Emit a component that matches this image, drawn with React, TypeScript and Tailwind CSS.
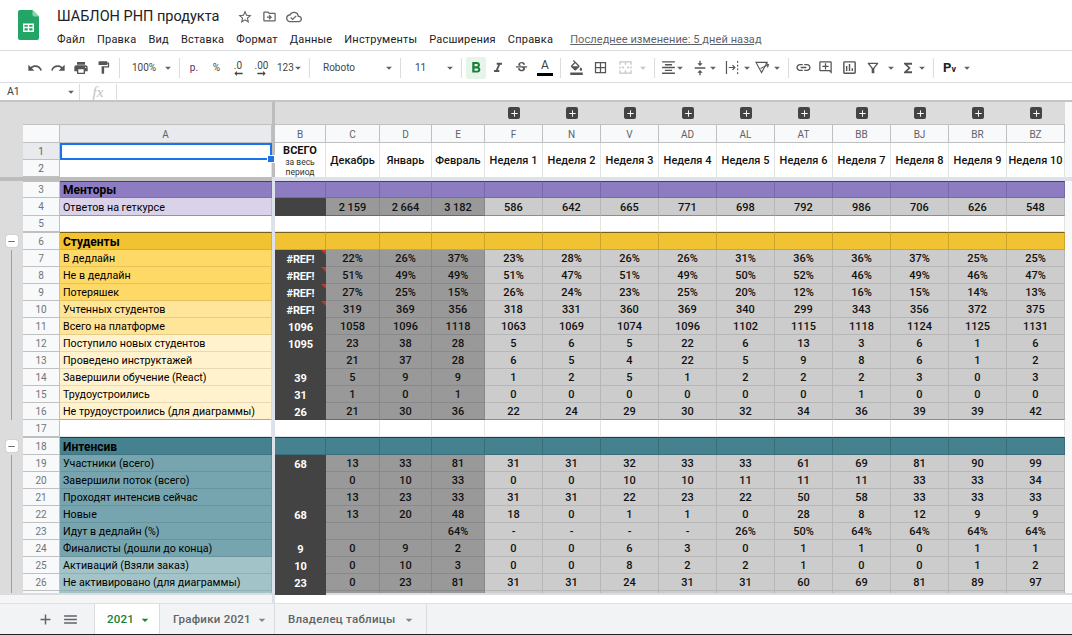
import type { ReactNode } from 'react';
import {
  MdAdd,
  MdArrowDropDown,
  MdBorderAll,
  MdFormatAlignCenter,
  MdFormatBold,
  MdFormatColorFill,
  MdFormatItalic,
  MdFormatPaint,
  MdFunctions,
  MdInsertLink,
  MdMenu,
  MdOutlineAddComment,
  MdOutlineCloudDone,
  MdOutlineDriveFileMove,
  MdOutlineFilterAlt,
  MdOutlineInsertChart,
  MdPrint,
  MdRedo,
  MdRemove,
  MdStarBorder,
  MdStrikethroughS,
  MdUndo,
  MdVerticalAlignCenter,
} from 'react-icons/md';

const cols = 'grid grid-cols-[23px_37px_212px_3px_51px_54px_52px_53px_repeat(10,58px)_7px]';

const menu = ['Файл', 'Правка', 'Вид', 'Вставка', 'Формат', 'Данные', 'Инструменты', 'Расширения', 'Справка'];
const letters = ['F', 'N', 'V', 'AD', 'AL', 'AT', 'BB', 'BJ', 'BR', 'BZ'];
const months = ['Декабрь', 'Январь', 'Февраль'];
const weeks = ['Неделя 1', 'Неделя 2', 'Неделя 3', 'Неделя 4', 'Неделя 5', 'Неделя 6', 'Неделя 7', 'Неделя 8', 'Неделя 9', 'Неделя 10'];

type Row = {
  n: number | '';
  label?: string;
  tone: string;
  h?: string;
  kind?: 'band' | 'blank';
  band?: string;
  group?: 'minus' | 'line';
  top?: boolean;
  edge?: boolean;
  b?: string;
  m?: string[];
  w?: string[];
};

const list = (s: string) => s.split(' ');
const pct = (s: string) => list(s).map((v) => v + '%');

const rows: Row[] = [
  { n: 3, label: 'Менторы', tone: 'bg-[#8e7cc3]', kind: 'band', band: 'bg-[#8e7cc3]', top: true },
  { n: 4, label: 'Ответов на геткурсе', tone: 'bg-[#d9d2e9]', h: 'h-[18px]', edge: true, b: '', m: ['2 159', '2 664', '3 182'], w: list('586 642 665 771 698 792 986 706 626 548') },
  { n: 5, tone: 'bg-white', h: 'h-[16px]', kind: 'blank' },
  { n: 6, label: 'Студенты', tone: 'bg-[#f1c232]', h: 'h-[18px]', kind: 'band', band: 'bg-[#f1c232]', group: 'minus', top: true },
  { n: 7, label: 'В дедлайн', tone: 'bg-[#ffd966]', group: 'line', b: '#REF!', m: pct('22 26 37'), w: pct('23 28 26 26 31 36 36 37 25 25') },
  { n: 8, label: 'Не в дедлайн', tone: 'bg-[#ffd966]', group: 'line', b: '#REF!', m: pct('51 49 49'), w: pct('51 47 51 49 50 52 46 49 46 47') },
  { n: 9, label: 'Потеряшек', tone: 'bg-[#ffd966]', group: 'line', b: '#REF!', m: pct('27 25 15'), w: pct('26 24 23 25 20 12 16 15 14 13') },
  { n: 10, label: 'Учтенных студентов', tone: 'bg-[#ffe599]', group: 'line', b: '#REF!', m: list('319 369 356'), w: list('318 331 360 369 340 299 343 356 372 375') },
  { n: 11, label: 'Всего на платформе', tone: 'bg-[#ffe599]', group: 'line', b: '1096', m: list('1058 1096 1118'), w: list('1063 1069 1074 1096 1102 1115 1118 1124 1125 1131') },
  { n: 12, label: 'Поступило новых студентов', tone: 'bg-[#fff2cc]', group: 'line', b: '1095', m: list('23 38 28'), w: list('5 6 5 22 6 13 3 6 1 6') },
  { n: 13, label: 'Проведено инструктажей', tone: 'bg-[#fff2cc]', group: 'line', b: '', m: list('21 37 28'), w: list('6 5 4 22 5 9 8 6 1 2') },
  { n: 14, label: 'Завершили обучение (React)', tone: 'bg-[#fff2cc]', group: 'line', b: '39', m: list('5 9 9'), w: list('1 2 5 1 2 2 2 3 0 3') },
  { n: 15, label: 'Трудоустроились', tone: 'bg-[#fff2cc]', group: 'line', b: '31', m: list('1 0 1'), w: list('0 0 0 0 0 0 1 0 0 0') },
  { n: 16, label: 'Не трудоустроились (для диаграммы)', tone: 'bg-[#fff2cc]', group: 'line', edge: true, b: '26', m: list('21 30 36'), w: list('22 24 29 30 32 34 36 39 39 42') },
  { n: 17, tone: 'bg-white', kind: 'blank' },
  { n: 18, label: 'Интенсив', tone: 'bg-[#45818e]', h: 'h-[18px]', kind: 'band', band: 'bg-[#45818e]', group: 'minus', top: true },
  { n: 19, label: 'Участники (всего)', tone: 'bg-[#76a5af]', group: 'line', b: '68', m: list('13 33 81'), w: list('31 31 32 33 33 61 69 81 90 99') },
  { n: 20, label: 'Завершили поток (всего)', tone: 'bg-[#76a5af]', group: 'line', b: '', m: list('0 10 33'), w: list('0 0 10 10 11 11 11 33 33 34') },
  { n: 21, label: 'Проходят интенсив сейчас', tone: 'bg-[#76a5af]', group: 'line', b: '', m: list('13 23 33'), w: list('31 31 22 23 22 50 58 33 33 33') },
  { n: 22, label: 'Новые', tone: 'bg-[#76a5af]', group: 'line', b: '68', m: list('13 20 48'), w: list('18 0 1 1 0 28 8 12 9 9') },
  { n: 23, label: 'Идут в дедлайн (%)', tone: 'bg-[#76a5af]', group: 'line', b: '', m: ['', '', '64%'], w: list('- - - - 26% 50% 64% 64% 64% 64%') },
  { n: 24, label: 'Финалисты (дошли до конца)', tone: 'bg-[#76a5af]', group: 'line', b: '9', m: list('0 9 2'), w: list('0 0 6 3 0 1 1 0 1 1') },
  { n: 25, label: 'Активаций (Взяли заказ)', tone: 'bg-[#a2c4c9]', group: 'line', b: '10', m: list('0 10 3'), w: list('0 0 8 2 2 1 0 0 1 2') },
  { n: 26, label: 'Не активировано (для диаграммы)', tone: 'bg-[#a2c4c9]', group: 'line', b: '23', m: list('0 23 81'), w: list('31 31 24 31 31 60 69 81 89 97') },
  { n: '', tone: 'bg-[#a2c4c9]', h: 'h-[2px]', group: 'line', b: '', m: ['', '', ''], w: ['', '', '', '', '', '', '', '', '', ''] },
];

function Tool({ w, children, className = 'justify-center' }: { w: string; children?: ReactNode; className?: string }) {
  return <div className={`flex h-[22px] shrink-0 items-center ${w} ${className}`}>{children}</div>;
}

function Sep() {
  return <div className="mx-[4px] h-[20px] w-px shrink-0 bg-[#dadce0]" />;
}

function Caret({ className = '' }: { className?: string }) {
  return <MdArrowDropDown size={14} className={`shrink-0 text-[#5f6368] ${className}`} />;
}

function DecimalIcon({ label, dir }: { label: string; dir: 'left' | 'right' }) {
  return (
    <div className="flex flex-col items-center text-[10px] leading-[11px] text-[#444746]">
      <span>{label}</span>
      <svg width="9" height="5" viewBox="0 0 10 6" className={dir === 'left' ? '' : 'rotate-180'}>
        <path d="M0 3l3-3v2h7v2H3v2z" fill="#444746" />
      </svg>
    </div>
  );
}

function Toolbar() {
  const ic = 'text-[#555]';
  return (
    <div className="flex h-[32px] items-center border-b border-[#dadce0] pl-[23px] pt-[2px] text-[10px] text-[#444746]">
      <Tool w="w-[23px]"><MdUndo size={16} className={ic} /></Tool>
      <Tool w="w-[23px]"><MdRedo size={16} className={ic} /></Tool>
      <Tool w="w-[23px]"><MdPrint size={16} className={ic} /></Tool>
      <Tool w="w-[23px]"><MdFormatPaint size={15} className={ic} /></Tool>
      <Sep />
      <Tool w="w-[51px]" className="justify-between pl-[8px]"><span>100%</span><Caret /></Tool>
      <Sep />
      <Tool w="w-[20px]"><span className="text-[#5b2c6f]">р.</span></Tool>
      <Tool w="w-[23px]" className="ml-px justify-center"><span>%</span></Tool>
      <Tool w="w-[20px]"><DecimalIcon label=".0" dir="left" /></Tool>
      <Tool w="w-[23px]" className="ml-[2px] justify-center"><DecimalIcon label=".00" dir="right" /></Tool>
      <Tool w="w-[32px]" className="justify-between pl-[4px]"><span>123</span><Caret className="-ml-[4px]" /></Tool>
      <Sep />
      <Tool w="w-[82px]" className="justify-between pl-[9px]"><span>Roboto</span><Caret /></Tool>
      <Sep />
      <Tool w="w-[52px]" className="justify-between pl-[10px]"><span>11</span><Caret /></Tool>
      <Sep />
      <Tool w="w-[20px]" className="justify-center rounded-[2px] bg-[#e6f4ea]"><MdFormatBold size={18} className="text-[#188038]" /></Tool>
      <Tool w="w-[22px]" className="ml-px justify-center"><MdFormatItalic size={16} className={ic} /></Tool>
      <Tool w="w-[22px]" className="ml-px justify-center"><MdStrikethroughS size={15} className={ic} /></Tool>
      <Tool w="w-[22px]" className="ml-[2px] flex-col justify-center">
        <span className="text-[12px] leading-[13px] text-[#3c4043]">A</span>
        <span className="mt-px h-[3px] w-[16px] bg-black" />
      </Tool>
      <Sep />
      <Tool w="w-[22px]"><MdFormatColorFill size={15} className={ic} /></Tool>
      <Tool w="w-[22px]" className="ml-[2px] justify-center"><MdBorderAll size={15} className={ic} /></Tool>
      <Tool w="w-[22px]" className="ml-[3px] justify-center">
        <svg width="13" height="13" viewBox="0 0 14 14" fill="none" stroke="#c4c7cc" strokeWidth="1.4">
          <path d="M1 4V1h12v3M1 10v3h12v-3" />
          <path d="M1 6v2M13 6v2M3 7h2.5M8.5 7H11M7 1v3M7 10v3" />
        </svg>
      </Tool>
      <Caret className="!text-[#c4c7cc]" />
      <Sep />
      <Tool w="w-[30px]" className="justify-start pl-px">
        <MdFormatAlignCenter size={17} className={ic} /><Caret className="-ml-[4px]" />
      </Tool>
      <Tool w="w-[30px]" className="ml-[2px] justify-start pl-px">
        <MdVerticalAlignCenter size={16} className={ic} /><Caret className="-ml-[2px]" />
      </Tool>
      <Tool w="w-[29px]" className="ml-[3px] justify-start pl-px">
        <svg width="15" height="13" viewBox="0 0 16 14" className="shrink-0" fill="none" stroke="#555" strokeWidth="1.3">
          <path d="M1.5 0v14" />
          <path d="M13.5 0v2M13.5 4v2M13.5 8v2M13.5 12v2" />
          <path d="M4 7h6M8 4.5L10.5 7 8 9.5" />
        </svg>
        <Caret />
      </Tool>
      <Tool w="w-[30px]" className="ml-px justify-start pl-px">
        <svg width="15" height="13" viewBox="0 0 16 14" className="shrink-0" fill="none" stroke="#555" strokeWidth="1.2">
          <path d="M1 1.5h12L7 12.5z" />
          <path d="M6 8l8-4M11.5 2.5L14.5 4l-1.2 3" />
        </svg>
        <Caret />
      </Tool>
      <Sep />
      <Tool w="w-[21px]"><MdInsertLink size={17} className={ic} /></Tool>
      <Tool w="w-[23px]"><MdOutlineAddComment size={15} className={ic} /></Tool>
      <Tool w="w-[22px]" className="ml-px justify-center"><MdOutlineInsertChart size={17} className={ic} /></Tool>
      <Tool w="w-[23px]" className="ml-px justify-center"><MdOutlineFilterAlt size={16} className={ic} /></Tool>
      <Caret />
      <Tool w="w-[20px]"><MdFunctions size={16} className={ic} /></Tool>
      <Caret className="-ml-[3px]" />
      <Sep />
      <Tool w="w-[23px]">
        <span className="text-[13px] font-bold text-[#202124]">P<span className="text-[9px]">v</span></span>
      </Tool>
      <Caret className="-ml-px" />
    </div>
  );
}

function Gutter({ group }: { group?: Row['group'] }) {
  return (
    <div className="flex justify-center bg-[#dcdcdc]">
      {group === 'line' && <div className="h-full w-px bg-[#9aa0a6]" />}
      {group === 'minus' && (
        <div className="mt-[3px] flex h-[12px] w-[12px] items-center justify-center rounded-[2px] bg-white shadow-[0_0_1px_#80868b]">
          <MdRemove size={11} className="text-[#5f6368]" />
        </div>
      )}
    </div>
  );
}

function SheetRow({ row }: { row: Row }) {
  const edge = row.edge ? 'border-b-black/30' : '';
  const top = row.top ? 'border-t border-t-black/50' : '';
  const cell = 'flex items-center justify-center overflow-hidden border-r border-b border-black/10 text-[11px] font-medium text-[#111]';
  const span = Array.from({ length: 14 });

  return (
    <div className={`${cols} ${row.h ?? 'h-[17px]'}`}>
      <Gutter group={row.group} />
      <div className={`flex items-center justify-center overflow-hidden border-r border-b border-[#c0c0c0] bg-[#f8f9fa] text-[10px] text-[#70757a] ${row.top ? 'border-t' : ''}`}>
        {row.n}
      </div>
      {row.kind === 'blank' ? (
        <div className="border-r border-b border-[#e2e3e3] bg-white" />
      ) : (
        <div className={`flex items-center overflow-hidden whitespace-nowrap border-r border-b border-black/10 pl-[3px] text-black ${row.tone} ${edge} ${top} ${row.kind === 'band' ? 'pt-px text-[12px] font-bold' : 'pt-[3px] text-[10.7px]'}`}>
          {row.label}
        </div>
      )}
      <div className="bg-[#dde1ea]" />
      {row.kind === 'blank' && span.map((_, i) => <div key={i} className="border-r border-b border-[#e2e3e3] bg-white" />)}
      {row.kind === 'band' && span.map((_, i) => <div key={i} className={`border-r border-b border-black/15 ${row.band} ${top}`} />)}
      {!row.kind && (
        <>
          <div className={`relative flex items-center justify-center overflow-hidden bg-[#434343] pt-[3px] text-[11px] font-bold text-white ${row.b === '#REF!' ? 'tracking-[-0.2px]' : ''}`}>
            {row.b}
            {row.b === '#REF!' && (
              <span className="absolute right-0 top-0 border-t-[5px] border-l-[5px] border-t-[#c0392b] border-l-transparent" />
            )}
          </div>
          {row.m?.map((v, i) => (
            <div key={i} className={`${cell} bg-[#999999] pt-[3px] ${edge}`}>{v}</div>
          ))}
          {row.w?.map((v, i) => (
            <div key={i} className={`${cell} bg-[#cccccc] pt-[3px] ${edge}`}>{v}</div>
          ))}
        </>
      )}
      <div className="bg-[#f8f9fa]" />
    </div>
  );
}

function ColHead({ label, wide }: { label: string; wide?: boolean }) {
  return (
    <div className={`flex items-center justify-center border-r border-b border-t border-[#c0c0c0] pt-[2px] text-[10px] text-[#5f6368] ${wide ? 'bg-[#e8eaed]' : 'bg-[#f8f9fa]'}`}>
      {label}
    </div>
  );
}

function Frozen() {
  const title = 'row-span-2 row-start-1 flex items-center justify-center whitespace-nowrap border-r border-[#e2e3e3] bg-white text-[#111]';
  return (
    <>
      <div className={`${cols} h-[22px]`}>
        <div className="col-span-3 bg-[#dcdcdc]" />
        <div className="bg-[#bdbdbd]" />
        <div className="col-span-4 bg-[#dcdcdc]" />
        {letters.map((l) => (
          <div key={l} className="flex items-center justify-center bg-[#dcdcdc]">
            <div className="flex h-[12px] w-[12px] items-center justify-center rounded-[2px] bg-[#444]">
              <MdAdd size={11} className="text-white" />
            </div>
          </div>
        ))}
        <div className="bg-[#f8f9fa]" />
      </div>
      <div className={`${cols} h-[19px]`}>
        <div className="bg-[#dcdcdc]" />
        <div className="border-r border-b border-t border-[#c0c0c0] bg-[#f8f9fa]" />
        <ColHead label="A" wide />
        <div className="bg-[#bdbdbd]" />
        {['B', 'C', 'D', 'E', ...letters].map((l) => <ColHead key={l} label={l} />)}
        <div className="bg-[#f8f9fa]" />
      </div>
      <div className={`${cols} h-[34px] grid-rows-[17px_17px]`}>
        <div className="col-start-1 row-span-2 row-start-1 bg-[#dcdcdc]" />
        <div className="col-start-2 row-start-1 flex items-center justify-center border-r border-b border-[#c0c0c0] bg-[#e8eaed] text-[10px] text-[#5f6368]">1</div>
        <div className="relative col-start-3 row-start-1 border-2 border-[#1a73e8] bg-white">
          <span className="absolute -bottom-[4px] -right-[4px] h-[6px] w-[6px] bg-[#1a73e8] outline outline-1 outline-white" />
        </div>
        <div className="col-start-4 row-span-2 row-start-1 bg-[#bdbdbd]" />
        <div className={`col-start-5 flex-col ${title}`}>
          <span className="text-[11px] font-bold leading-[13px]">ВСЕГО</span>
          <span className="text-center text-[8.5px] leading-[10px] text-[#333]">за весь<br />период</span>
        </div>
        {[...months, ...weeks].map((m) => (
          <div key={m} className={`${title} pt-[3px] text-[11px] font-medium`}>{m}</div>
        ))}
        <div className="row-span-2 row-start-1 bg-[#f8f9fa]" />
        <div className="col-start-2 row-start-2 flex items-center justify-center border-r border-b border-[#c0c0c0] bg-[#f8f9fa] text-[10px] text-[#5f6368]">2</div>
        <div className="col-start-3 row-start-2 border-r border-[#e2e3e3] bg-white" />
      </div>
      <div className="flex h-[4px]">
        <div className="w-[272px] bg-[#bdbdbd]" />
        <div className="flex-1 bg-[#dde1ea]" />
      </div>
    </>
  );
}

function Tabs() {
  const tab = 'flex items-center whitespace-nowrap border-r border-[#dadce0] pt-px text-[11.5px] font-medium tracking-[0.25px]';
  return (
    <div className="flex h-[30px] bg-[#f1f3f4] text-[#5f6368]">
      <div className="flex w-[94px] items-center justify-end pr-[15px]">
        <MdAdd size={17} className="mr-[8px]" />
        <MdMenu size={17} />
      </div>
      <div className={`${tab} w-[66px] border-l bg-white pl-[12px] text-[#188038]`}>
        2021
        <MdArrowDropDown size={16} className="ml-[3px]" />
      </div>
      <div className={`${tab} w-[115px] pl-[13px]`}>
        Графики 2021
        <MdArrowDropDown size={16} className="ml-[3px] text-[#80868b]" />
      </div>
      <div className={`${tab} w-[152px] pl-[13px]`}>
        Владелец таблицы
        <MdArrowDropDown size={16} className="ml-[6px] text-[#80868b]" />
      </div>
    </div>
  );
}

export default function App() {
  return (
    <div className="flex h-[635px] w-[1072px] flex-col overflow-hidden bg-white font-['Roboto',sans-serif]">
      <header className="flex h-[51px] shrink-0 border-b border-[#dadce0]">
        <div className="flex w-[57px] shrink-0 justify-start pl-[18px] pt-[10px]">
          <svg width="21" height="30" viewBox="0 0 21 30">
            <path d="M2 0h12.5L21 6.5V28a2 2 0 0 1-2 2H2a2 2 0 0 1-2-2V2a2 2 0 0 1 2-2z" fill="#23a566" />
            <path d="M14.5 0L21 6.5h-4.5a2 2 0 0 1-2-2z" fill="#8ed1b1" />
            <path d="M5 13.5h11v8.5H5zM6.5 15v1.8h3.3V15zm4.7 0v1.8h3.3V15zm-4.7 3.2v2.3h3.3v-2.3zm4.7 0v2.3h3.3v-2.3z" fill="#fff" fillRule="evenodd" />
          </svg>
        </div>
        <div className="flex flex-col pt-[7px]">
          <div className="flex h-[19px] items-center">
            <span className="w-[180px] whitespace-nowrap text-[14.5px] text-[#202124]">ШАБЛОН РНП продукта</span>
            <MdStarBorder size={16} className="text-[#5f6368]" />
            <MdOutlineDriveFileMove size={15} className="ml-[9px] text-[#5f6368]" />
            <MdOutlineCloudDone size={16} className="ml-[9px] text-[#5f6368]" />
          </div>
          <nav className="mt-[6px] flex h-[16px] items-center gap-[12px] whitespace-nowrap text-[11px] tracking-[0.2px] text-[#202124]">
            {menu.map((m) => <span key={m}>{m}</span>)}
            <span className="ml-[5px] tracking-[0.08px] text-[#5f6368] underline">Последнее изменение: 5 дней назад</span>
          </nav>
        </div>
      </header>

      <Toolbar />

      <div className="flex h-[19px] shrink-0 items-center border-b-2 border-[#c4c4c4] pt-px text-[10.5px] text-[#3c4043]">
        <div className="flex w-[80px] items-center justify-between border-r border-[#dadce0] pl-[7px] pr-px">
          <span>A1</span>
          <Caret />
        </div>
        <div className="flex w-[37px] items-center justify-center border-r border-[#dadce0] font-['Liberation_Serif',serif] text-[15px] italic leading-[17px] text-[#bdc1c6]">fx</div>
      </div>

      <div className="shrink-0">
        <Frozen />
        {rows.map((r, i) => <SheetRow key={i} row={r} />)}
      </div>

      <div className="h-[2px] shrink-0 bg-[#dadce0]" />
      <div className="flex h-[8px] shrink-0">
        <div className="w-[272px] bg-[#f5f5f5]" />
        <div className="w-[3px] bg-[#dde1ea]" />
        <div className="flex-1 bg-white" />
      </div>
      <div className="h-px shrink-0 bg-[#e0e0e0]" />
      <Tabs />
      <div className="flex-1 bg-[#202124]" />
    </div>
  );
}
